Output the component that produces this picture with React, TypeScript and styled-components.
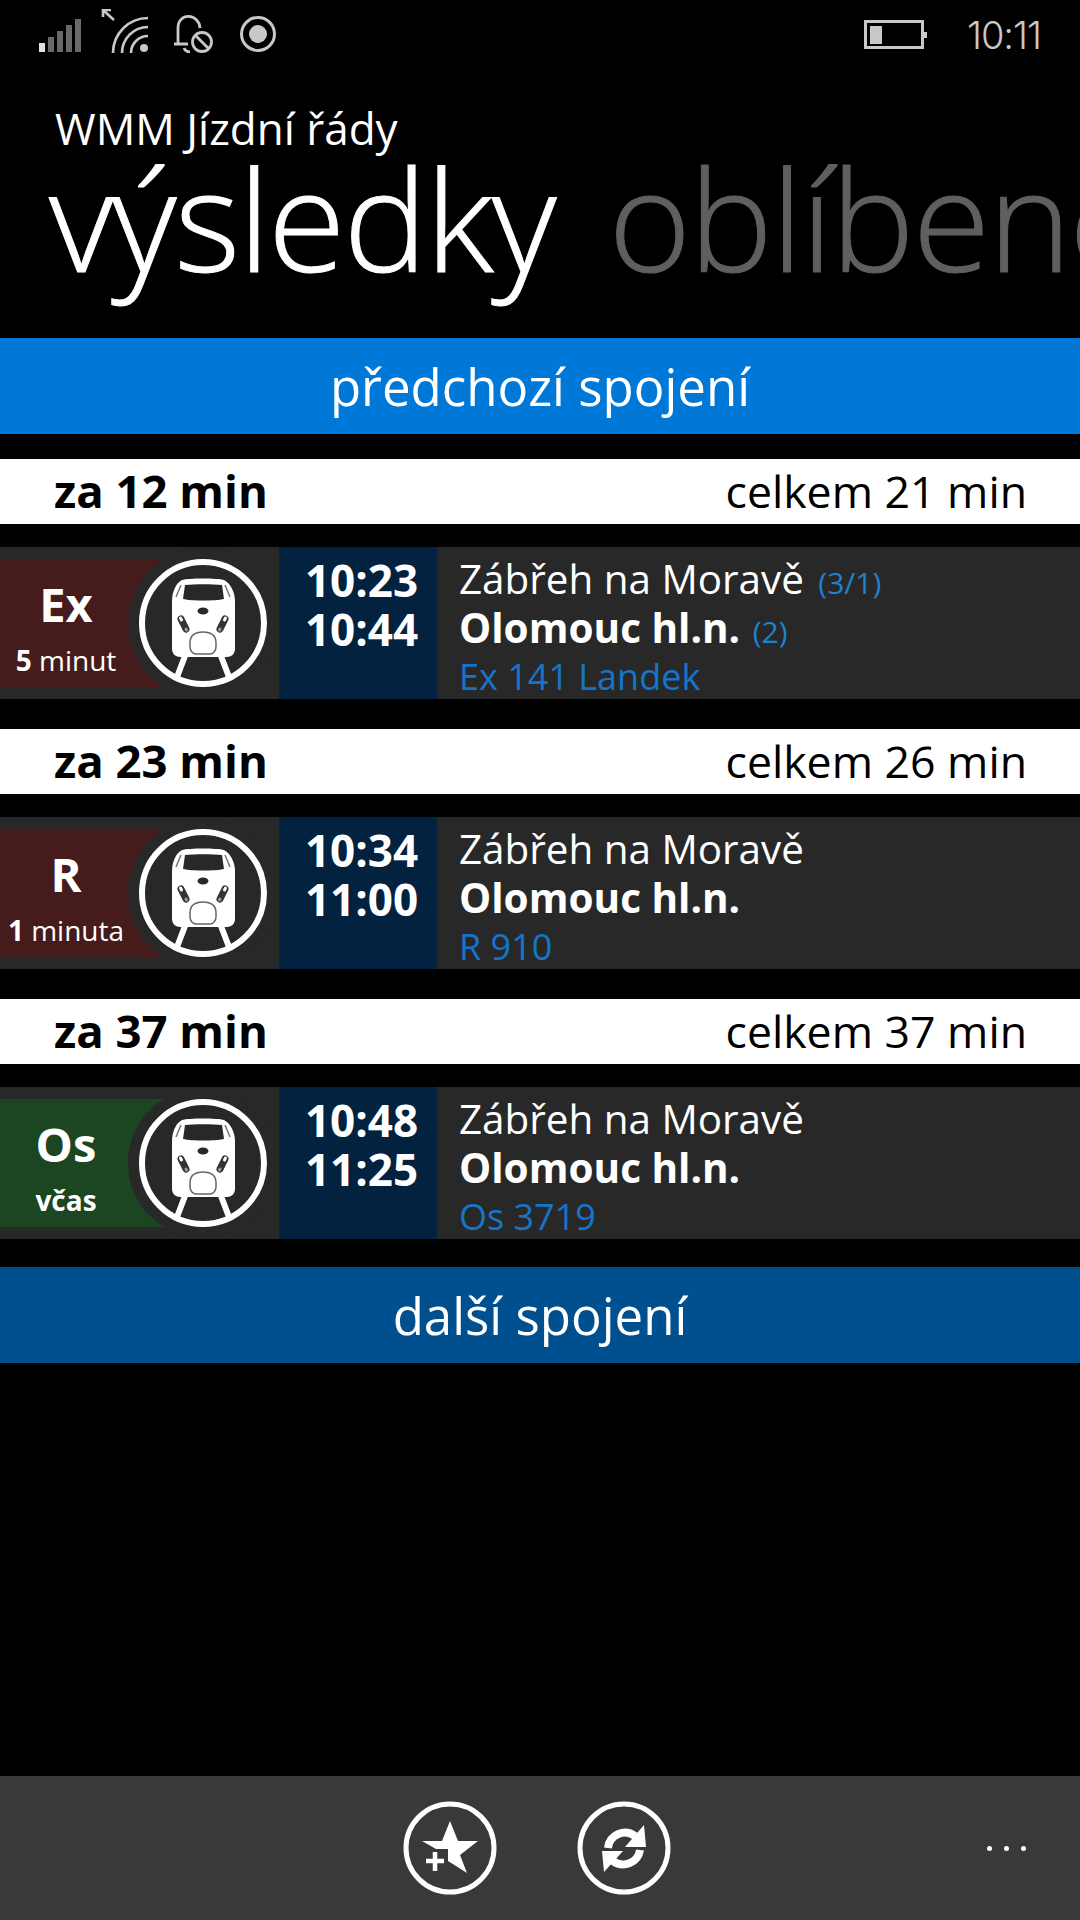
import React from "react";
import styled, { createGlobalStyle } from "styled-components";

interface Connection {
  departsIn: string;
  total: string;
  type: string;
  delay: React.ReactNode;
  band: string;
  from: string;
  fromPlatform?: string;
  depart: string;
  arrive: string;
  toPlatform?: string;
  train: string;
}

const connections: Connection[] = [
  {
    departsIn: "za 12 min",
    total: "celkem 21 min",
    type: "Ex",
    delay: (
      <>
        <b>5</b> minut
      </>
    ),
    band: "#451c1b",
    from: "Zábřeh na Moravě",
    fromPlatform: "(3/1)",
    depart: "10:23",
    arrive: "10:44",
    toPlatform: "(2)",
    train: "Ex 141 Landek",
  },
  {
    departsIn: "za 23 min",
    total: "celkem 26 min",
    type: "R",
    delay: (
      <>
        <b>1</b> minuta
      </>
    ),
    band: "#451c1b",
    from: "Zábřeh na Moravě",
    depart: "10:34",
    arrive: "11:00",
    train: "R 910",
  },
  {
    departsIn: "za 37 min",
    total: "celkem 37 min",
    type: "Os",
    delay: <b>včas</b>,
    band: "#1c4522",
    from: "Zábřeh na Moravě",
    depart: "10:48",
    arrive: "11:25",
    train: "Os 3719",
  },
];

const TrainIcon = () => (
  <svg width="128" height="128" viewBox="0 0 128 128">
    <circle cx="64" cy="64" r="61" fill="none" stroke="#fff" strokeWidth="6" />
    <path d="M46 97 L38 118 M82 97 L90 118" stroke="#fff" strokeWidth="6" fill="none" />
    <path
      d="M33 42 C33 33 37 24 43 21 C50 19 78 19 85 21 C91 24 96 33 96 42 L96 90 C96 95 92 98 88 98 L41 98 C37 98 33 95 33 90 Z"
      fill="#fff"
    />
    <path d="M46 26 C55 25 74 25 83 26 L85 40 C76 42 53 42 44 40 Z" fill="#282828" />
    <path d="M42 26 L37 38 M86 26 L91 38" stroke="#777" strokeWidth="1.5" fill="none" />
    <ellipse cx="64" cy="52" rx="5.5" ry="3.5" fill="#282828" />
    <path d="M42 60 L47 70 M86 60 L81 70" stroke="#333" strokeWidth="7" strokeLinecap="round" fill="none" />
    <path d="M41.5 59 L42.5 61 M86.5 59 L85.5 61" stroke="#fff" strokeWidth="3" strokeLinecap="round" fill="none" />
    <path d="M47 70 L47.5 71 M81 70 L80.5 71" stroke="#999" strokeWidth="3" strokeLinecap="round" fill="none" />
    <path
      d="M51 84 C51 76 56 73 64 73 C72 73 77 76 77 84 L77 88 C77 92 74 95 71 95 L57 95 C54 95 51 92 51 88 Z"
      fill="#fff"
      stroke="#666"
      strokeWidth="1.5"
    />
  </svg>
);

const App = () => {
  return (
    <Page>
      <GlobalStyle />
      <StatusBar>
        <StatusIcons>
          <svg width="42" height="44" viewBox="0 0 42 44">
            <rect x="0" y="34" width="6" height="9" fill="#e2e2e2" />
            <rect x="9" y="28" width="6" height="15" fill="#6a6a6a" />
            <rect x="18" y="22" width="6" height="21" fill="#6a6a6a" />
            <rect x="27" y="16" width="6" height="27" fill="#6a6a6a" />
            <rect x="36" y="10" width="6" height="33" fill="#6a6a6a" />
          </svg>
          <svg width="48" height="44" viewBox="0 0 48 44" fill="none" stroke="#c8c8c8">
            <path d="M13 11 L2 1 M2 8 L2 1 L10 1" strokeWidth="2.6" />
            <path d="M47 9 A35 35 0 0 0 12 44 M47 18 A26 26 0 0 0 21 44 M47 27 A17 17 0 0 0 30 44" strokeWidth="2.6" />
            <circle cx="43" cy="39" r="4" fill="#c8c8c8" stroke="none" />
          </svg>
          <svg width="48" height="44" viewBox="0 0 48 44" fill="none" stroke="#c8c8c8" strokeWidth="2.8">
            <path d="M5 35 L19 35 M9 35 L9 19 C9 3 30 4 31 19 M15 39 C16 42 18 43 21 43" />
            <circle cx="33" cy="33" r="9.5" />
            <path d="M27 27 L39 39" />
          </svg>
          <svg width="42" height="44" viewBox="0 0 42 44" fill="none">
            <circle cx="21" cy="25" r="16.5" stroke="#c8c8c8" strokeWidth="3" />
            <circle cx="21" cy="25" r="9" fill="#c8c8c8" />
          </svg>
        </StatusIcons>
        <svg width="64" height="30" viewBox="0 0 64 30" fill="none">
          <rect x="1.5" y="1.5" width="57" height="26" stroke="#c8c8c8" strokeWidth="3" />
          <rect x="6" y="6" width="12" height="18" fill="#c8c8c8" />
          <rect x="60" y="12" width="3" height="6" fill="#c8c8c8" />
        </svg>
        <Clock>10:11</Clock>
      </StatusBar>

      <AppTitle>WMM Jízdní řády</AppTitle>
      <Pivot>
        <PivotItem $active>výsledky</PivotItem>
        <PivotItem>oblíbené</PivotItem>
      </Pivot>

      <PagerButton $color="#0078d7">předchozí spojení</PagerButton>

      <Results>
        {connections.map((item) => (
          <Group key={item.departsIn}>
            <GroupHeader>
              <strong>{item.departsIn}</strong>
              <span>{item.total}</span>
            </GroupHeader>
            <Card>
              <Badge>
                <Band $color={item.band}>
                  <TrainType>{item.type}</TrainType>
                  <Delay>{item.delay}</Delay>
                </Band>
                <IconDisc>
                  <TrainIcon />
                </IconDisc>
              </Badge>
              <Times>
                <div>{item.depart}</div>
                <div>{item.arrive}</div>
              </Times>
              <Info>
                <Stop>
                  {item.from} {item.fromPlatform && <Platform $gap={4}>{item.fromPlatform}</Platform>}
                </Stop>
                <Stop $bold>
                  Olomouc hl.n. {item.toPlatform && <Platform $gap={2}>{item.toPlatform}</Platform>}
                </Stop>
                <TrainName>{item.train}</TrainName>
              </Info>
            </Card>
          </Group>
        ))}
      </Results>

      <PagerButton $color="#004f8e">další spojení</PagerButton>

      <AppBar>
        <RoundButton>
          <svg width="94" height="94" viewBox="0 0 94 94">
            <circle cx="47" cy="47" r="44" fill="none" stroke="#fff" strokeWidth="5" />
            <path d="M47 20 L55 40 L75 40 L57 54 L64 72 L45 60 L45 48 L33 48 L19 40 L39 40 Z" fill="#fff" />
            <path d="M32 51 L32 70 M23 60 L41 60" stroke="#fff" strokeWidth="4.5" />
          </svg>
        </RoundButton>
        <RoundButton>
          <svg width="94" height="94" viewBox="0 0 94 94" fill="none">
            <circle cx="47" cy="47" r="44" stroke="#fff" strokeWidth="5" />
            <path d="M31 47 A17 17 0 0 1 58 35" stroke="#fff" strokeWidth="8" />
            <path d="M67 24 L69 46 L48 46 Z" fill="#fff" />
            <path d="M63 49 A17 17 0 0 1 36 60" stroke="#fff" strokeWidth="8" />
            <path d="M27 71 L25 50 L46 50 Z" fill="#fff" />
          </svg>
        </RoundButton>
        <MoreDots>
          <i />
          <i />
          <i />
        </MoreDots>
      </AppBar>
    </Page>
  );
};

const GlobalStyle = createGlobalStyle`
  body {
    margin: 0;
    background: #000;
    font-family: "Open Sans", "Noto Sans", sans-serif;
    color: #fff;
  }
`;

const Page = styled.div`
  width: 1080px;
  height: 1920px;
  display: flex;
  flex-direction: column;
  overflow: hidden;
  background: #000;
`;

const StatusBar = styled.div`
  height: 70px;
  flex-shrink: 0;
  display: flex;
  align-items: center;
  padding: 0 39px;
`;

const StatusIcons = styled.div`
  display: flex;
  align-items: flex-start;
  align-self: flex-start;
  gap: 20px;
  margin: 9px auto 0 0;
`;

const Clock = styled.div`
  margin-left: 39px;
  font-family: Inter, "Open Sans", sans-serif;
  font-size: 38px;
  font-weight: 300;
  letter-spacing: -1px;
  color: #c8c8c8;
`;

const AppTitle = styled.div`
  margin: 30px 0 0 55px;
  font-size: 44px;
  line-height: 56px;
`;

const Pivot = styled.div`
  display: flex;
  gap: 54px;
  height: 182px;
  margin-left: 49px;
  white-space: nowrap;
`;

const PivotItem = styled.div<{ $active?: boolean }>`
  font-size: 141px;
  line-height: 122px;
  font-weight: 300;
  letter-spacing: -2px;
  -webkit-text-stroke: 1px ${(props) => (props.$active ? "#fff" : "#5f5f5f")};
  color: ${(props) => (props.$active ? "#fff" : "#5f5f5f")};
`;

const PagerButton = styled.div<{ $color: string }>`
  height: 96px;
  flex-shrink: 0;
  display: flex;
  align-items: center;
  justify-content: center;
  font-size: 51px;
  background: ${(props) => props.$color};
`;

const Results = styled.div`
  display: flex;
  flex-direction: column;
  gap: 30px;
  padding: 25px 0 28px;
`;

const Group = styled.div`
  display: flex;
  flex-direction: column;
  gap: 23px;
`;

const GroupHeader = styled.div`
  height: 65px;
  box-sizing: border-box;
  display: flex;
  align-items: center;
  justify-content: space-between;
  padding: 0 53px 3px 54px;
  background: #fff;
  color: #000;
  font-size: 44.6px;

  strong {
    font-size: 45.5px;
  }
`;

const Card = styled.div`
  height: 152px;
  display: flex;
  background: #282828;
`;

const Badge = styled.div`
  width: 279px;
  display: flex;
  align-items: center;
`;

const Band = styled.div<{ $color: string }>`
  width: 165px;
  height: 128px;
  flex-shrink: 0;
  padding-right: 33px;
  box-sizing: border-box;
  display: flex;
  flex-direction: column;
  align-items: center;
  background: ${(props) => props.$color};
`;

const TrainType = styled.div`
  margin-top: 14px;
  font-size: 47px;
  line-height: 62px;
  font-weight: 700;
`;

const Delay = styled.div`
  margin-top: 5px;
  font-size: 28px;
  line-height: 40px;
  white-space: nowrap;
`;

const IconDisc = styled.div`
  width: 150px;
  height: 150px;
  flex-shrink: 0;
  margin-left: -37px;
  border-radius: 50%;
  display: flex;
  align-items: center;
  justify-content: center;
  background: #282828;
`;

const Times = styled.div`
  width: 158px;
  padding: 9px 0 0 7px;
  box-sizing: border-box;
  display: flex;
  flex-direction: column;
  align-items: center;
  font-size: 44px;
  line-height: 49px;
  font-weight: 700;
  background: #02223f;
`;

const Info = styled.div`
  padding: 7px 0 0 22px;
  display: flex;
  flex-direction: column;
  font-size: 40px;
  line-height: 49px;
`;

const Stop = styled.div<{ $bold?: boolean }>`
  height: 49px;
  font-size: ${(props) => (props.$bold ? "40.5px" : "40.4px")};
  font-weight: ${(props) => (props.$bold ? 700 : 400)};
  white-space: nowrap;
`;

const Platform = styled.span<{ $gap: number }>`
  margin-left: ${(props) => props.$gap}px;
  font-size: 30px;
  line-height: 1;
  font-weight: 400;
  color: #1f80d0;
`;

const TrainName = styled.div`
  font-size: 36px;
  color: #1675c8;
`;

const AppBar = styled.div`
  margin-top: auto;
  height: 144px;
  display: flex;
  align-items: center;
  gap: 80px;
  padding: 0 54px 0 403px;
  background: #393939;
`;

const RoundButton = styled.div`
  width: 94px;
  height: 94px;
  display: flex;
`;

const MoreDots = styled.div`
  margin-left: auto;
  display: flex;
  gap: 12px;

  i {
    width: 5px;
    height: 5px;
    border-radius: 50%;
    background: #fff;
  }
`;

export default App;
